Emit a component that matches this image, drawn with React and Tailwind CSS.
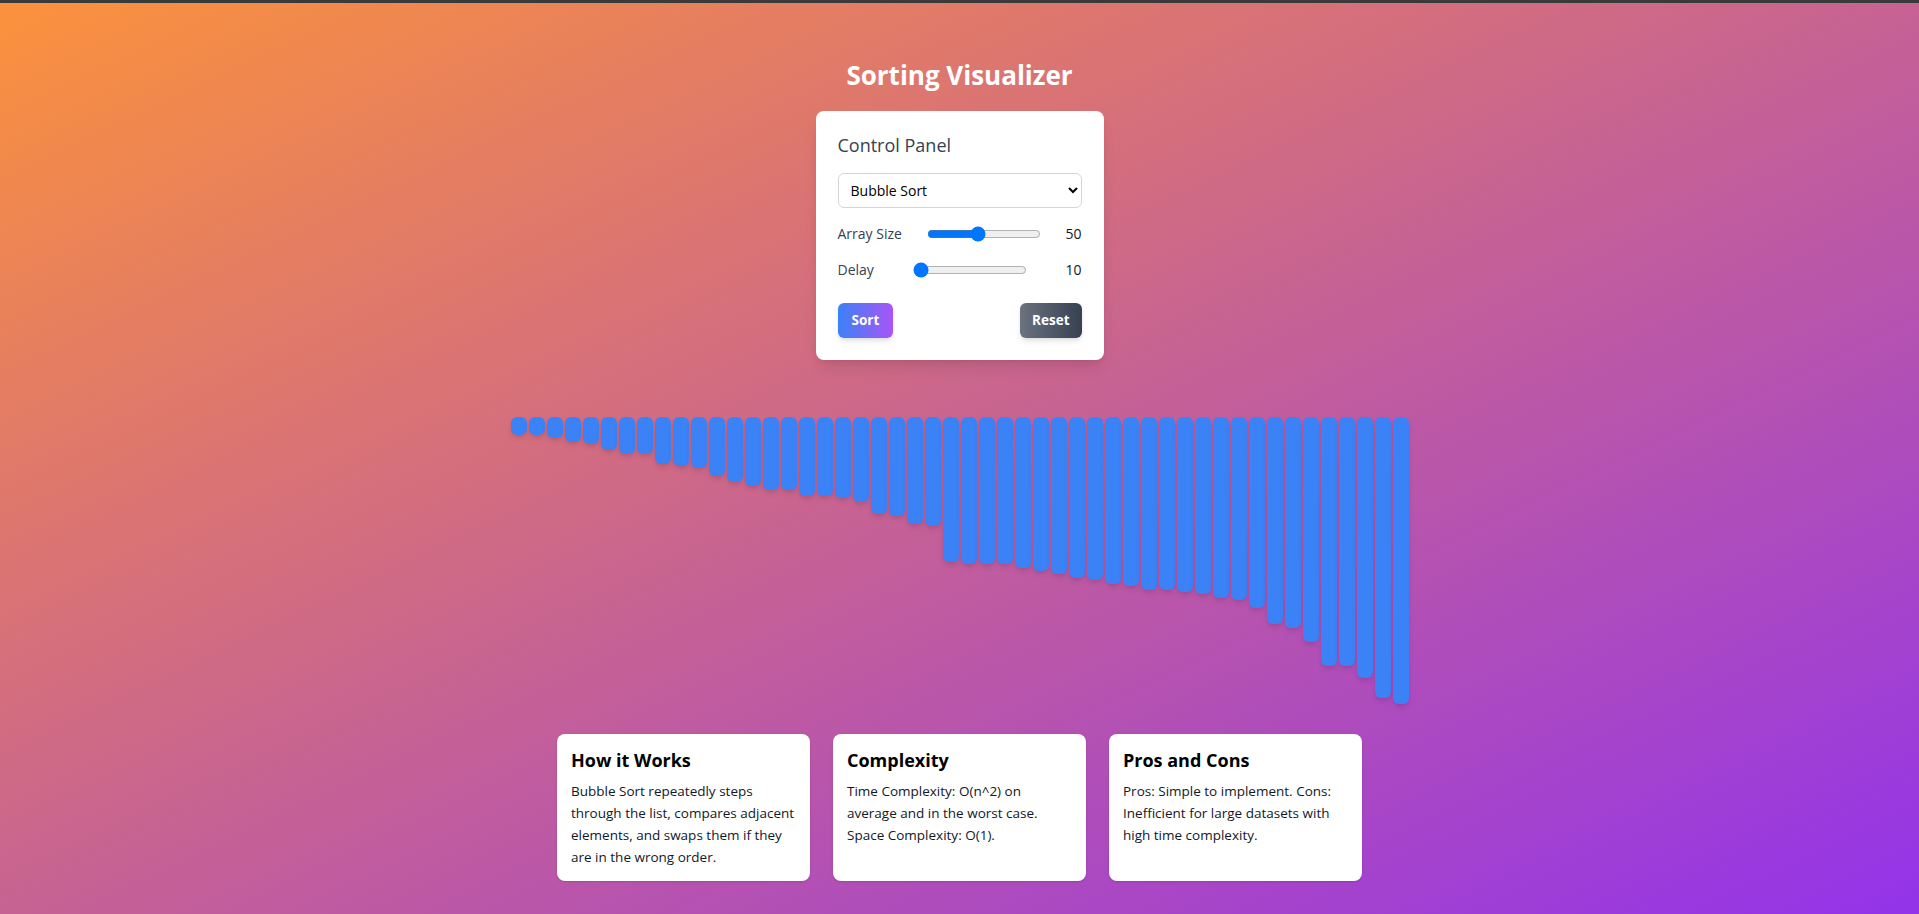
import { useState } from 'react'

const HEIGHTS = [
  18, 18, 21, 25, 27, 33, 37, 37, 47, 49, 51, 59, 65, 69, 73, 73, 79, 79, 81, 85,
  97, 99, 107, 109, 145, 147, 147, 147, 151, 154, 157, 161, 163, 167, 169, 173, 173, 175, 177, 181,
  183, 191, 207, 211, 225, 249, 249, 261, 281, 287,
]

// lines kept as in the design so wrapping matches across fonts
const CARDS = [
  {
    title: 'How it Works',
    lines: [
      'Bubble Sort repeatedly steps',
      'through the list, compares adjacent',
      'elements, and swaps them if they',
      'are in the wrong order.',
    ],
  },
  {
    title: 'Complexity',
    lines: ['Time Complexity: O(n^2) on', 'average and in the worst case.', 'Space Complexity: O(1).'],
  },
  {
    title: 'Pros and Cons',
    lines: ['Pros: Simple to implement. Cons:', 'Inefficient for large datasets with', 'high time complexity.'],
  },
]

function SliderRow({ label, value, min, max, onChange }) {
  return (
    <div className="flex items-center justify-between h-5 text-sm">
      <span className="text-[#374151]">{label}</span>
      <input
        type="range"
        min={min}
        max={max}
        value={value}
        onChange={(e) => onChange(Number(e.target.value))}
        className="w-[114px] m-0"
      />
      <span className="text-[#111827]">{value}</span>
    </div>
  )
}

export default function App() {
  const [algo, setAlgo] = useState('bubble')
  const [size, setSize] = useState(50)
  const [delay, setDelay] = useState(10)

  return (
    <div className="min-h-screen bg-[linear-gradient(to_bottom_right,#fb923c,#9333ea)] font-['Open_Sans','Noto_Sans',sans-serif]">
      <div className="h-[3px] bg-[#3a3a3a]" />
      <div className="flex flex-col items-center pt-[56px]">
        <h1 className="text-[26px] leading-8 font-bold text-white mb-5">Sorting Visualizer</h1>

        <div className="w-72 bg-white rounded-lg shadow-lg p-[22px]">
          <h2 className="text-lg leading-6 font-medium text-[#374151] mb-4">Control Panel</h2>
          <select
            value={algo}
            onChange={(e) => setAlgo(e.target.value)}
            className="w-full h-[35px] px-2 text-sm text-black bg-white border border-[#d1d5db] rounded-md"
          >
            <option value="bubble">Bubble Sort</option>
            <option value="selection">Selection Sort</option>
            <option value="insertion">Insertion Sort</option>
            <option value="merge">Merge Sort</option>
            <option value="quick">Quick Sort</option>
          </select>
          <div className="mt-4 flex flex-col gap-4">
            <SliderRow label="Array Size" value={size} min={10} max={100} onChange={setSize} />
            <SliderRow label="Delay" value={delay} min={10} max={500} onChange={setDelay} />
          </div>
          <div className="mt-[23px] flex justify-between">
            <button className="h-[35px] px-3.5 rounded-md text-[13.5px] font-bold text-white shadow-md bg-[linear-gradient(to_right,#3b82f6,#a855f7)]">
              Sort
            </button>
            <button className="h-[35px] px-3 rounded-md text-[13.5px] font-bold text-white shadow-md bg-[linear-gradient(to_right,#6b7280,#374151)]">
              Reset
            </button>
          </div>
        </div>

        <div className="mt-[57px] h-[293px] flex items-start gap-0.5">
          {HEIGHTS.map((h, i) => (
            <div key={i} className="w-4 rounded-md bg-[#3b82f6] shadow-md" style={{ height: h }} />
          ))}
        </div>

        <div className="mt-6 flex gap-[23px]">
          {CARDS.map((c) => (
            <div key={c.title} className="w-[253px] h-[147px] bg-white rounded-lg shadow p-3.5">
              <h3 className="text-lg leading-6 font-bold text-black mb-2">{c.title}</h3>
              <p className="text-[13.5px] leading-[22px] text-[#111827]">
                {c.lines.map((l) => (
                  <span key={l} className="block whitespace-nowrap">{l}</span>
                ))}
              </p>
            </div>
          ))}
        </div>
      </div>
    </div>
  )
}
